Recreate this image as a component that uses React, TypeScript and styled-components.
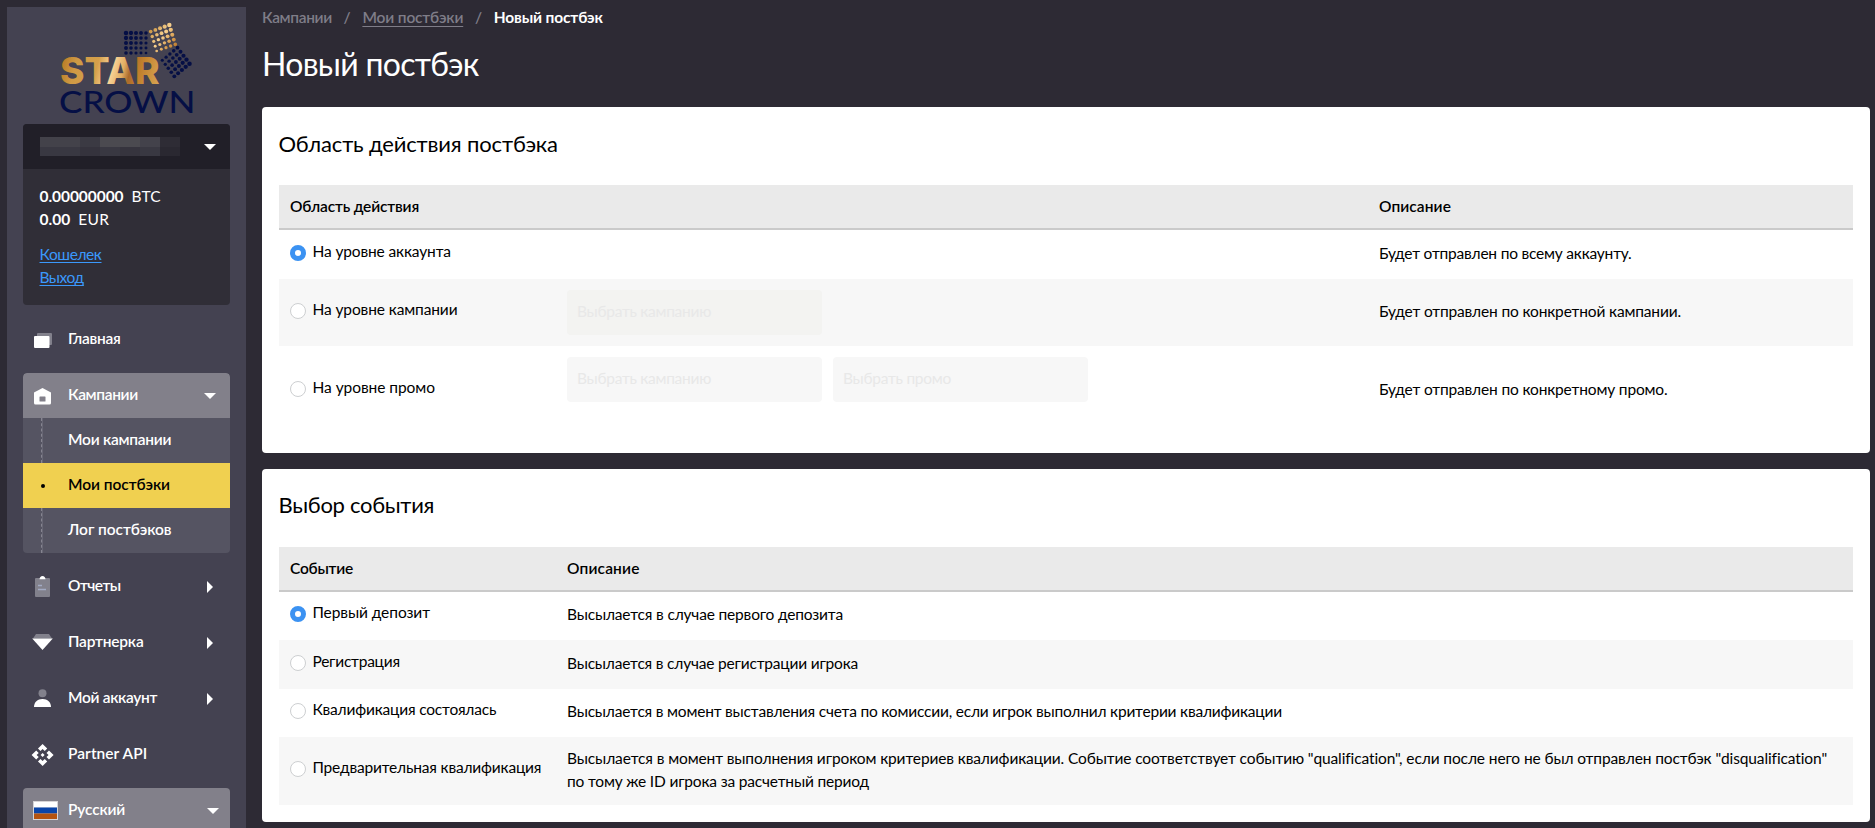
import React from "react";
import styled, { createGlobalStyle } from "styled-components";

const GlobalStyle = createGlobalStyle`
  * { box-sizing: border-box; }
  html, body { margin: 0; padding: 0; background: #2d2a34; }
  body {
    font-family: "Lato", "Noto Sans", sans-serif;
    font-size: 15.5px;
    line-height: 23px;
    color: #000;
    overflow: hidden;
  }
`;

const Page = styled.div`
  display: flex;
  align-items: flex-start;
  height: 828px;
  overflow: hidden;
  padding: 7px 5px 0 7px;
`;

/* ---------- text ---------- */
const Label = styled.span<{ $track?: number }>`
  white-space: nowrap;
  letter-spacing: ${(p) => p.$track ?? 0}px;
`;

/* ---------- sidebar ---------- */
const Sidebar = styled.aside`
  width: 239px;
  height: 840px;
  flex: none;
  padding: 0 16px;
  background: #444251;
`;

const LogoBox = styled.div`
  height: 117px;
  padding: 8px 0 0 27px;
  svg { display: block; }
`;

const Account = styled.section`
  height: 181px;
  border-radius: 4px;
  overflow: hidden;
  background: #302e37;
  color: #fff;
`;

const AccountHead = styled.div`
  height: 45px;
  display: flex;
  align-items: center;
  justify-content: space-between;
  padding: 0 14px 0 17px;
  background: #211f28;
`;

const MaskedName = styled.div`
  display: grid;
  grid-template-columns: repeat(7, 20px);
  grid-template-rows: 10px 9px;
`;

const MaskCell = styled.i<{ $c: string }>`
  background: ${(p) => p.$c};
`;

const AccountBody = styled.div`
  padding: 16px 16.5px 0;
`;

const Balance = styled.div`
  display: flex;
  gap: 8px;
  strong { font-weight: 700; }
`;

const AccountLinks = styled.div`
  display: flex;
  flex-direction: column;
  align-items: flex-start;
  margin-top: 12px;
`;

const AccountLink = styled.a<{ $track: number }>`
  color: #3b99fc;
  text-decoration: underline;
  text-decoration-thickness: 1px;
  text-underline-offset: 2px;
  text-decoration-skip-ink: none;
  letter-spacing: ${(p) => p.$track}px;
`;

const Nav = styled.nav`
  display: flex;
  flex-direction: column;
  gap: 11px;
  margin-top: 12px;
`;

const Group = styled.div`
  border-radius: 4px;
  overflow: hidden;
`;

const NavItem = styled.a<{ $open?: boolean; $edge?: number }>`
  height: 45px;
  display: grid;
  grid-template-columns: 45px 1fr 24px;
  align-items: center;
  padding: 0 ${(p) => p.$edge ?? 8}px 0 0;
  border-radius: ${(p) => (p.$open ? "4px 4px 0 0" : "0")};
  background: ${(p) => (p.$open ? "#82808a" : "transparent")};
  color: #fff;
  font-weight: 600;
  ${Label} { padding-bottom: 2px; }
`;

const NavIcon = styled.span<{ $left?: number }>`
  display: flex;
  padding-left: ${(p) => p.$left ?? 8}px;
`;

const Caret = styled.span`
  display: flex;
  justify-content: center;
`;

const SubItem = styled.a<{ $active?: boolean }>`
  height: 45px;
  display: grid;
  grid-template-columns: 45px 1fr;
  align-items: center;
  background: ${(p) => (p.$active ? "#f0d050" : "#555462")};
  color: ${(p) => (p.$active ? "#000" : "#fff")};
  font-weight: 600;
  ${Label} { padding-bottom: 2px; }
`;

const Rail = styled.span`
  align-self: stretch;
  width: 2px;
  margin-left: 18px;
  border-left: 1px dashed #858490;
  border-right: 1px solid #686775;
`;

const Dot = styled.span`
  width: 4px;
  height: 4px;
  margin: 1px 0 0 18px;
  border-radius: 50%;
  background: #000;
`;

/* ---------- main ---------- */
const Main = styled.main`
  flex: 1;
  margin-left: 16px;
`;

const Crumbs = styled.div`
  display: flex;
  height: 23px;
  margin-top: -1px;
  line-height: 23px;
  color: #7f7d88;
  font-weight: 600;
`;

const Slash = styled.span`
  width: 30.5px;
  text-align: center;
`;

const CrumbLink = styled(Label)`
  text-decoration: underline;
  text-decoration-thickness: 1px;
  text-underline-offset: 3px;
  text-decoration-skip-ink: none;
`;

const Current = styled(Label)`
  color: #fff;
  font-weight: 700;
`;

const Title = styled.h1`
  margin: 14px 0 23px;
  height: 41px;
  font-size: 32px;
  line-height: 41px;
  font-weight: 400;
  color: #fff;
  letter-spacing: -0.7px;
`;

const Card = styled.section`
  margin-bottom: 16px;
  padding: 0 17px 17px;
  border-radius: 4px;
  background: #fff;
`;

const CardTitle = styled.h2<{ $track: number; $top: number }>`
  height: 78px;
  margin: 0 0 0 -0.5px;
  padding-top: ${(p) => p.$top}px;
  font-size: 22px;
  line-height: 32px;
  font-weight: 400;
  letter-spacing: ${(p) => p.$track}px;
`;

const HeadRow = styled.div<{ $cols: string }>`
  height: 45px;
  display: grid;
  grid-template-columns: ${(p) => p.$cols};
  align-items: center;
  padding-left: 11px;
  border-bottom: 2px solid #cacaca;
  background: #eaeaea;
  font-weight: 600;
`;

const Row = styled.div<{ $cols: string; $h: number; $alt?: boolean; $lift?: number }>`
  height: ${(p) => p.$h}px;
  display: grid;
  grid-template-columns: ${(p) => p.$cols};
  align-items: center;
  padding: 0 0 ${(p) => p.$lift ?? 0}px 11px;
  background: ${(p) => (p.$alt ? "#f7f7f7" : "#fff")};
`;

const RadioLabel = styled.label`
  display: flex;
  align-items: center;
  gap: 6.5px;
  padding-bottom: 3px;
  ${Label} { padding-bottom: 3px; }
`;

const Radio = styled.span<{ $on?: boolean }>`
  width: 16px;
  height: 16px;
  border-radius: 50%;
  background: #fff;
  border: ${(p) => (p.$on ? "5px solid #3b92f2" : "1px solid #cdcfd1")};
`;

const Desc = styled.div<{ $track: number }>`
  padding-bottom: 2px;
  letter-spacing: ${(p) => p.$track}px;
`;

const Fields = styled.div`
  align-self: start;
  display: flex;
  gap: 11px;
  padding-top: 11px;
`;

const Field = styled.div<{ $tint?: boolean }>`
  width: 255px;
  height: 45px;
  padding: 10px 10px;
  border-radius: 4px;
  background: ${(p) => (p.$tint ? "#f3f3f1" : "#f7f7f7")};
  color: #e8e8e8;
`;

/* ---------- drawings ---------- */
const CaretDown = () => (
  <svg width="12" height="6" viewBox="0 0 12 6"><path d="M0 0h12L6 6z" fill="#fff" /></svg>
);
const CaretRight = () => (
  <svg width="6" height="12" viewBox="0 0 6 12"><path d="M0 0v12l6-6z" fill="#fff" /></svg>
);

const steps = [0, 1, 2, 3, 4];

function DotGrid({ origin, across, down, big, fill }: {
  origin: [number, number]; across: [number, number]; down: [number, number];
  big: (i: number, j: number) => number; fill: string;
}) {
  return (
    <g fill={fill}>
      {steps.map((j) => steps.map((i) => (
        <circle
          key={`${i}-${j}`}
          cx={origin[0] + (across[0] * i + down[0] * j) / 4}
          cy={origin[1] + (across[1] * i + down[1] * j) / 4}
          r={2.25 - big(i, j) * 0.11}
        />
      )))}
    </g>
  );
}

const Logo = () => (
  <svg width="150" height="105" viewBox="0 0 150 105">
    <defs>
      <linearGradient id="gold" gradientUnits="userSpaceOnUse" x1="11" y1="46" x2="108" y2="72">
        <stop offset="0" stopColor="#b87a24" />
        <stop offset="0.15" stopColor="#cf9a45" />
        <stop offset="0.36" stopColor="#d5a04b" />
        <stop offset="0.5" stopColor="#fbd79c" />
        <stop offset="0.62" stopColor="#e2ad62" />
        <stop offset="0.69" stopColor="#aa6a2c" />
        <stop offset="0.78" stopColor="#c07f2c" />
        <stop offset="1" stopColor="#d8a452" />
      </linearGradient>
      <linearGradient id="goldDots" gradientUnits="userSpaceOnUse" x1="100" y1="12" x2="127" y2="32">
        <stop offset="0" stopColor="#c58d3a" />
        <stop offset="0.45" stopColor="#f7d08f" />
        <stop offset="0.75" stopColor="#d79c4e" />
        <stop offset="1" stopColor="#b8762c" />
      </linearGradient>
    </defs>
    <DotGrid origin={[76, 18]} across={[20, 0]} down={[0, 20]} big={(i, j) => i + j} fill="#050f45" />
    <DotGrid origin={[100.7, 16.6]} across={[18.6, -6.6]} down={[6, 19.4]} big={(i, j) => 4 - i + j} fill="url(#goldDots)" />
    <DotGrid origin={[112.3, 45.3]} across={[15.2, -12.6]} down={[12, 16]} big={(i, j) => (8 - i - j) * 0.8} fill="#050f45" />
    <text x="10" y="69" textLength="99.5" lengthAdjust="spacingAndGlyphs" fontFamily="Inter" fontWeight="800" fontSize="37" fill="url(#gold)">STAR</text>
    <text x="9" y="97.5" textLength="136.5" lengthAdjust="spacingAndGlyphs" fontFamily="Lato" fontWeight="500" fontSize="31" fill="#050f45">CROWN</text>
  </svg>
);

const HomeIcon = () => (
  <svg width="24" height="20" viewBox="0 1 24 20">
    <rect x="6" y="4" width="15" height="12" rx="1" fill="#82818c" />
    <rect x="3" y="7" width="15.5" height="12" rx="1" fill="#fff" />
  </svg>
);
const CampaignIcon = () => (
  <svg width="24" height="20" viewBox="0 0 24 20">
    <path d="M11.5 2 20 6.500V17a1.500 1.500 0 0 1-1.500 1.500h-14A1.500 1.500 0 0 1 3 17V6.500z" fill="#fff" />
    <rect x="8.500" y="10.500" width="6" height="5" rx="0.500" fill="#82808a" />
  </svg>
);
const ReportIcon = () => (
  <svg width="24" height="24" viewBox="0 1 24 24">
    <rect x="4" y="4" width="15" height="19" rx="1" fill="#82818c" />
    <path d="M8.500 5.300c0-2 1.300-3.300 3-3.300s3 1.300 3 3.300z" fill="#fff" />
    <path d="M7 11.500h4M7 15.500h8" stroke="#a3abc4" strokeWidth="1.600" />
  </svg>
);
const PartnerIcon = () => (
  <svg width="24" height="20" viewBox="0 1.500 24 20">
    <path d="M5 2.500h13l3 4.500H2z" fill="#82818c" />
    <path d="M1.200 7h20.600L11.500 18.500z" fill="#fff" />
  </svg>
);
const UserIcon = () => (
  <svg width="24" height="20" viewBox="0 0 24 20">
    <circle cx="11.500" cy="4.300" r="4" fill="#82818c" />
    <path d="M3 18c0-5 3.500-8 8.500-8s8.500 3 8.500 8z" fill="#fff" />
  </svg>
);
const ApiIcon = () => (
  <svg width="24" height="24" viewBox="0.400 0 24 24">
    <path fill="#fff" d="m14 12-2 2-2-2 2-2zm-2-6 2.120 2.120 2.500-2.500L12 1 7.380 5.620l2.500 2.500zm-6 6 2.120-2.120-2.500-2.500L1 12l4.620 4.620 2.500-2.500zm12 0-2.120 2.120 2.500 2.500L23 12l-4.620-4.620-2.500 2.500zm-6 6-2.120-2.120-2.500 2.500L12 23l4.620-4.620-2.500-2.500z" />
  </svg>
);
const FlagIcon = () => (
  <svg width="25" height="19" viewBox="0 0 25 19">
    <rect width="25" height="19" fill="#d6d4d6" />
    <rect x="1" y="1" width="23" height="5.500" fill="#fff" />
    <rect x="1" y="6.500" width="23" height="6" fill="#0a45a8" />
    <rect x="1" y="12.500" width="23" height="5.500" fill="#b4530f" />
  </svg>
);

/* ---------- data ---------- */
const mask = [
  "#43424a", "#43424a", "#3b3a43", "#4b4a50", "#4b4a50", "#43424b", "#2e2c35",
  "#393842", "#393842", "#35333d", "#393842", "#36343e", "#393842", "#2a2831",
];

const menu = [
  { text: "Отчеты", track: -0.55, icon: <ReportIcon /> },
  { text: "Партнерка", track: -0.2, icon: <PartnerIcon /> },
  { text: "Мой аккаунт", track: -0.325, icon: <UserIcon /> },
];

const events = [
  { name: "Первый депозит", nt: -0.107, h: 48, lift: 1, text: "Высылается в случае первого депозита", t: -0.171, on: true },
  { name: "Регистрация", nt: -0.27, h: 49, lift: 0, text: "Высылается в случае регистрации игрока", t: -0.196 },
  { name: "Квалификация состоялась", nt: -0.22, h: 48, lift: 1, text: "Высылается в момент выставления счета по комиссии, если игрок выполнил критерии квалификации", t: -0.195 },
  {
    name: "Предварительная квалификация", nt: -0.208, h: 68, lift: 1, t: -0.109,
    text: (
      <>
        <Label $track={-0.115}>Высылается в момент выполнения игроком критериев квалификации. Событие соответствует событию "qualification", если после него не был отправлен постбэк "disqualification"</Label>
        <br />
        <Label $track={-0.175}>по тому же ID игрока за расчетный период</Label>
      </>
    ),
  },
];

const SCOPE = "277px 812px 1fr";
const EVENT = "277px 1fr";

export default function App() {
  return (
    <Page>
      <GlobalStyle />
      <Sidebar>
        <LogoBox><Logo /></LogoBox>
        <Account>
          <AccountHead>
            <MaskedName>{mask.map((c, i) => <MaskCell key={i} $c={c} />)}</MaskedName>
            <CaretDown />
          </AccountHead>
          <AccountBody>
            <Balance><strong><Label $track={-0.059}>0.00000000</Label></strong><Label $track={0.2}>BTC</Label></Balance>
            <Balance><strong><Label>0.00</Label></strong><Label $track={0.4}>EUR</Label></Balance>
            <AccountLinks>
              <AccountLink $track={-0.4}>Кошелек</AccountLink>
              <AccountLink $track={-0.497}>Выход</AccountLink>
            </AccountLinks>
          </AccountBody>
        </Account>
        <Nav>
          <NavItem><NavIcon><HomeIcon /></NavIcon><Label $track={-0.275}>Главная</Label></NavItem>
          <Group>
            <NavItem $open>
              <NavIcon><CampaignIcon /></NavIcon>
              <Label $track={-0.34}>Кампании</Label>
              <Caret><CaretDown /></Caret>
            </NavItem>
            <SubItem><Rail /><Label $track={-0.25}>Мои кампании</Label></SubItem>
            <SubItem $active><Dot /><Label $track={-0.05}>Мои постбэки</Label></SubItem>
            <SubItem><Rail /><Label $track={-0.06}>Лог постбэков</Label></SubItem>
          </Group>
          {menu.map((m) => (
            <NavItem key={m.text}>
              <NavIcon>{m.icon}</NavIcon>
              <Label $track={m.track}>{m.text}</Label>
              <Caret><CaretRight /></Caret>
            </NavItem>
          ))}
          <NavItem><NavIcon><ApiIcon /></NavIcon><Label $track={0.05}>Partner API</Label></NavItem>
          <NavItem $open $edge={5}>
            <NavIcon $left={10}><FlagIcon /></NavIcon>
            <Label $track={-0.15}>Русский</Label>
            <Caret><CaretDown /></Caret>
          </NavItem>
        </Nav>
      </Sidebar>

      <Main>
        <Crumbs>
          <Label $track={-0.344}>Кампании</Label>
          <Slash>/</Slash>
          <CrumbLink $track={-0.15}>Мои постбэки</CrumbLink>
          <Slash>/</Slash>
          <Current $track={-0.141}>Новый постбэк</Current>
        </Crumbs>
        <Title>Новый постбэк</Title>

        <Card>
          <CardTitle $track={-0.15} $top={21}>Область действия постбэка</CardTitle>
          <HeadRow $cols={SCOPE}>
            <Label $track={-0.162}>Область действия</Label>
            <span />
            <Label $track={0.086}>Описание</Label>
          </HeadRow>
          <Row $cols={SCOPE} $h={49}>
            <RadioLabel><Radio $on /><Label $track={-0.13}>На уровне аккаунта</Label></RadioLabel>
            <span />
            <Desc $track={-0.201}>Будет отправлен по всему аккаунту.</Desc>
          </Row>
          <Row $cols={SCOPE} $h={67} $alt $lift={1}>
            <RadioLabel><Radio /><Label $track={-0.11}>На уровне кампании</Label></RadioLabel>
            <Fields><Field $tint><Label $track={-0.274}>Выбрать кампанию</Label></Field></Fields>
            <Desc $track={-0.152}>Будет отправлен по конкретной кампании.</Desc>
          </Row>
          <Row $cols={SCOPE} $h={90} $lift={2}>
            <RadioLabel><Radio /><Label $track={-0.05}>На уровне промо</Label></RadioLabel>
            <Fields>
              <Field><Label $track={-0.274}>Выбрать кампанию</Label></Field>
              <Field><Label $track={-0.266}>Выбрать промо</Label></Field>
            </Fields>
            <Desc $track={-0.154}>Будет отправлен по конкретному промо.</Desc>
          </Row>
        </Card>

        <Card>
          <CardTitle $track={-0.28} $top={20}>Выбор события</CardTitle>
          <HeadRow $cols={EVENT}>
            <Label $track={-0.223}>Событие</Label>
            <Label $track={0.15}>Описание</Label>
          </HeadRow>
          {events.map((e, i) => (
            <Row key={e.name} $cols={EVENT} $h={e.h} $alt={i % 2 === 1} $lift={e.lift}>
              <RadioLabel><Radio $on={e.on} /><Label $track={e.nt + 0.03}>{e.name}</Label></RadioLabel>
              <Desc $track={e.t}>{e.text}</Desc>
            </Row>
          ))}
        </Card>
      </Main>
    </Page>
  );
}
